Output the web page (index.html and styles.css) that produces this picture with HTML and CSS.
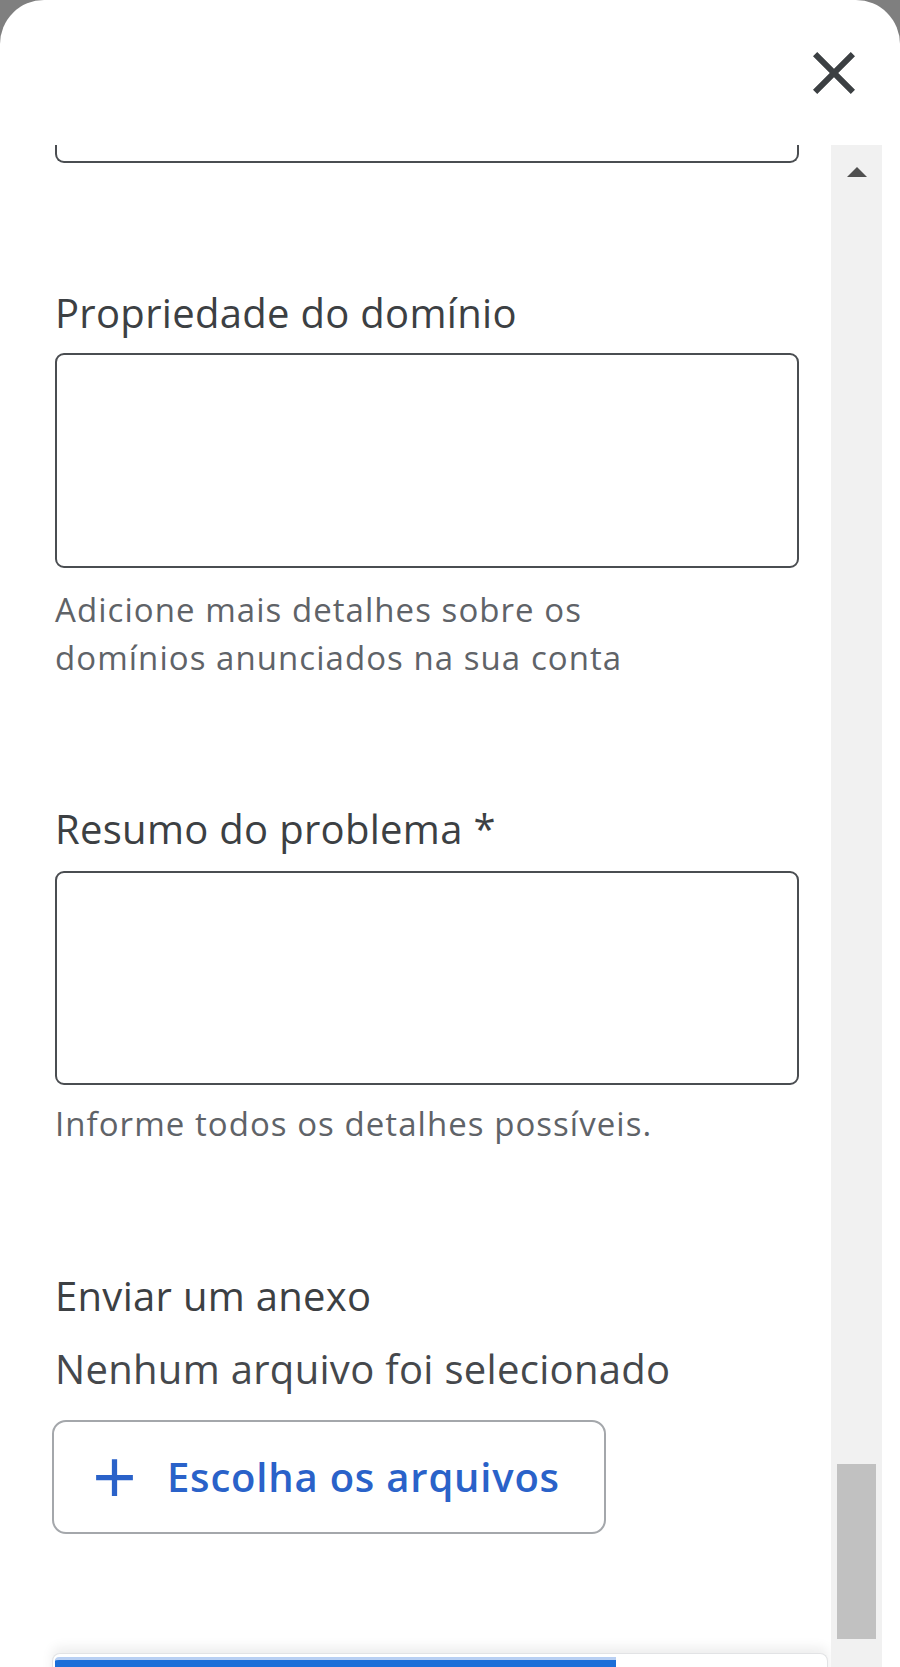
FILE: index.html
```html
<!DOCTYPE html>
<html lang="pt-BR">
<head>
<meta charset="utf-8">
<title>Formulário</title>
<link rel="stylesheet" href="styles.css">
</head>
<body>
<div class="overlay">
  <div class="dialog">
    <header class="dlg-head">
      <button class="close" aria-label="Fechar">
        <svg viewBox="0 0 24 24" width="72" height="72" aria-hidden="true">
          <path d="M19 6.41L17.59 5 12 10.59 6.41 5 5 6.41 10.59 12 5 17.59 6.41 19 12 13.41 17.59 19 19 17.59 13.41 12z"/>
        </svg>
      </button>
    </header>
    <div class="dlg-body">
      <div class="content">
        <div class="field-tail"></div>

        <div class="label label-domain">Propriedade do domínio</div>
        <div class="textbox textbox-domain"></div>
        <p class="helper helper-domain">Adicione mais detalhes sobre os domínios anunciados na sua conta</p>

        <div class="label label-summary">Resumo do problema *</div>
        <div class="textbox textbox-summary"></div>
        <p class="helper helper-summary">Informe todos os detalhes possíveis.</p>

        <div class="label label-attach">Enviar um anexo</div>
        <div class="label file-state">Nenhum arquivo foi selecionado</div>
        <button class="choose">
          <svg class="plus" viewBox="0 0 24 24" width="63" height="63" aria-hidden="true">
            <path d="M19 13h-6v6h-2v-6H5v-2h6V5h2v6h6v2z"/>
          </svg>
          <span>Escolha os arquivos</span>
        </button>

        <div class="footer">
          <div class="primary"></div>
          <div class="secondary"></div>
        </div>
      </div>
      <div class="scrollbar">
        <div class="arrow-up"></div>
        <div class="thumb"></div>
      </div>
      <div class="gutter"></div>
    </div>
  </div>
</div>
</body>
</html>
```

FILE: styles.css
```css
html, body {
  margin: 0;
  padding: 0;
  height: 100%;
}

body {
  background: #7f7f7f;
  font-family: "Open Sans", "Noto Sans", "Liberation Sans", sans-serif;
  overflow: hidden;
}

.overlay {
  height: 100vh;
}

.dialog {
  height: 100vh;
  background: #ffffff;
  border-radius: 44px 44px 0 0;
  display: flex;
  flex-direction: column;
  overflow: hidden;
}

.dlg-head {
  height: 145px;
  flex: 0 0 145px;
  display: flex;
  align-items: center;
  justify-content: flex-end;
  padding-right: 30px;
  box-sizing: border-box;
}

.close {
  border: none;
  background: transparent;
  padding: 0;
  margin: 0;
  width: 72px;
  height: 72px;
  cursor: pointer;
  display: block;
}

.close svg {
  display: block;
  fill: #3c4043;
}

.dlg-body {
  flex: 1 1 auto;
  display: flex;
  min-height: 0;
}

.content {
  flex: 1 1 auto;
  padding: 0 32px 0 55px;
  display: flex;
  flex-direction: column;
  align-items: flex-start;
  overflow: hidden;
  min-width: 0;
}

.field-tail {
  align-self: stretch;
  height: 18px;
  flex: 0 0 18px;
  box-sizing: border-box;
  border: 2px solid #4a4d51;
  border-top: none;
  border-radius: 0 0 9px 9px;
}

.label {
  font-size: 40px;
  line-height: 48px;
  letter-spacing: 0.3px;
  color: #3c4043;
  white-space: nowrap;
}

.label-domain {
  margin-top: 126px;
}

.label-summary {
  margin-top: 123px;
}

.label-attach {
  margin-top: 124px;
}

.file-state {
  margin-top: 25px;
  color: #45484c;
}

.textbox {
  align-self: stretch;
  box-sizing: border-box;
  border: 2px solid #4a4d51;
  border-radius: 9px;
}

.textbox-domain {
  margin-top: 16px;
  height: 215px;
  flex: 0 0 215px;
}

.textbox-summary {
  margin-top: 18px;
  height: 214px;
  flex: 0 0 214px;
}

.helper {
  margin: 0;
  max-width: 620px;
  font-size: 33px;
  line-height: 48px;
  letter-spacing: 1.05px;
  color: #5f6368;
}

.helper-domain {
  margin-top: 18px;
}

.helper-summary {
  margin-top: 15px;
}

.choose {
  margin: 27px 0 0 -3px;
  width: 554px;
  height: 114px;
  flex: 0 0 114px;
  box-sizing: border-box;
  border: 2px solid #a4a7ab;
  border-radius: 14px;
  background: #ffffff;
  display: flex;
  align-items: center;
  padding: 0 0 0 29px;
  gap: 21px;
  font-family: "Open Sans", "Noto Sans", "Liberation Sans", sans-serif;
  font-size: 40px;
  font-weight: 600;
  letter-spacing: 0.8px;
  color: #2a62c9;
  cursor: pointer;
}

.choose span {
  line-height: 48px;
}

.plus {
  fill: #2a62c9;
  flex: 0 0 auto;
}

.footer {
  margin: 119px -29px 0 -3px;
  align-self: stretch;
  height: 60px;
  flex: 0 0 60px;
  display: flex;
  background: #ffffff;
  border: 1px solid #e2e3e5;
  border-bottom: none;
  border-radius: 8px 8px 0 0;
  box-shadow: 0 -6px 12px rgba(0, 0, 0, 0.07);
  padding: 3px 0 0 2px;
  box-sizing: border-box;
}

.primary {
  width: 561px;
  background: #1b6fd8;
  border-top: 3px solid #b9d0f3;
  border-radius: 4px 0 0 0;
}

.secondary {
  flex: 1 1 auto;
}

.scrollbar {
  flex: 0 0 51px;
  width: 51px;
  background: #f1f1f1;
  display: flex;
  flex-direction: column;
  align-items: center;
}

.arrow-up {
  margin-top: 22px;
  width: 0;
  height: 0;
  border-left: 10.5px solid transparent;
  border-right: 10.5px solid transparent;
  border-bottom: 10px solid #505050;
}

.thumb {
  margin-top: auto;
  margin-bottom: 28px;
  width: 39px;
  height: 175px;
  background: #c1c1c1;
}

.gutter {
  flex: 0 0 18px;
  background: #ffffff;
}
```
